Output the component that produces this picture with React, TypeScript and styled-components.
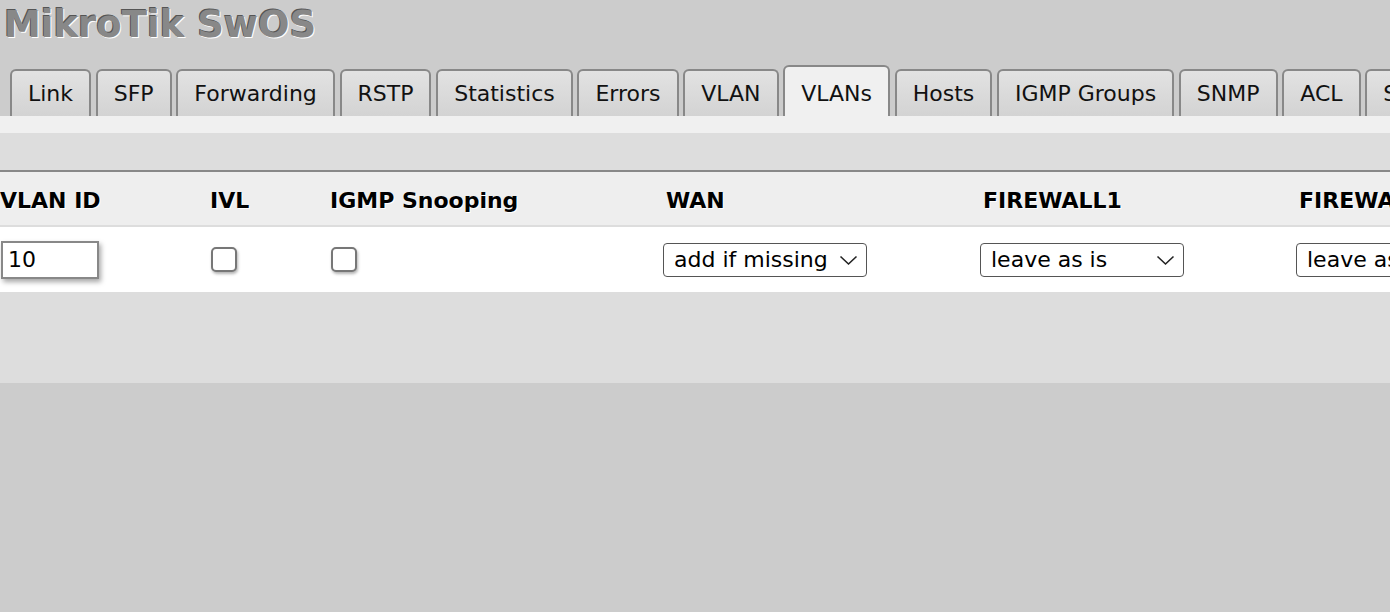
import React from 'react';
import styled, { createGlobalStyle } from 'styled-components';

const Global = createGlobalStyle`
  html, body { margin: 0; padding: 0; background: #cccccc; }
  body { font-family: "DejaVu Sans", Verdana, sans-serif; overflow: hidden; }
`;

const Page = styled.div`
  width: 1390px;
  height: 612px;
  overflow: hidden;
  background: #cccccc;
`;

const Title = styled.h1`
  margin: 0;
  height: 65px;
  box-sizing: border-box;
  padding: 6px 0 0 4px;
  font: bold 37px/37px "DejaVu Sans", Verdana, sans-serif;
  color: #888888;
  text-shadow: -1px -1px 0 #555555, 1px 1px 0 #ffffff;
  white-space: nowrap;
`;

const TabBar = styled.nav`
  display: flex;
  align-items: flex-end;
  gap: 4.7px;
  padding-left: 10px;
  height: 51px;
  white-space: nowrap;
`;

const Tab = styled.div<{ $active?: boolean }>`
  flex: none;
  box-sizing: border-box;
  border: 2px solid #888888;
  border-bottom: none;
  border-radius: 6px 6px 0 0;
  padding: ${(p) => (p.$active ? '14px' : '10px')} 16px 10px;
  font-size: 22px;
  line-height: 25px;
  color: #111111;
  background: ${(p) =>
    p.$active ? '#f0f0f0' : 'linear-gradient(#e2e2e2, #d3d3d3)'};
`;

const Strip = styled.div`
  height: 17px;
  background: #f0f0f0;
`;

const Panel = styled.section`
  background: #dddddd;
  padding: 37px 0 91px;
`;

const Table = styled.div`
  border-top: 2px solid #888888;
  overflow: hidden;
`;

const Row = styled.div<{ $head?: boolean }>`
  display: grid;
  grid-template-columns: 210px 120px 333px 317px 316px 317px 317px;
  align-items: center;
  height: ${(p) => (p.$head ? '53px' : '65px')};
  background: ${(p) => (p.$head ? '#eeeeee' : '#ffffff')};
  border-bottom: ${(p) => (p.$head ? '2px solid #dddddd' : 'none')};
  white-space: nowrap;
`;

const HeadCell = styled.div<{ $indent?: number }>`
  padding-left: ${(p) => p.$indent ?? 0}px;
  padding-top: 3px;
  font-weight: bold;
  font-size: 22px;
  color: #000000;
  text-shadow: 1px 1px 0 #ffffff;
`;

const Cell = styled.div`
  display: flex;
  align-items: center;
  padding-left: 1px;
`;

const TextInput = styled.input`
  box-sizing: border-box;
  width: 98px;
  height: 38px;
  border: 2px solid #888888;
  padding: 0 5px;
  margin: 0;
  font: 22px "DejaVu Sans", Verdana, sans-serif;
  color: #000000;
  background: #ffffff;
  box-shadow: 2px 3px 5px rgba(0, 0, 0, 0.35);
  outline: none;
`;

const Check = styled.input`
  appearance: none;
  -webkit-appearance: none;
  box-sizing: border-box;
  width: 26px;
  height: 25px;
  margin: 0;
  border: 2px solid #777777;
  border-radius: 5px;
  background: #ffffff;
  box-shadow: 1px 2px 3px rgba(0, 0, 0, 0.3);
`;

const SelectWrap = styled.div`
  position: relative;
  margin-left: -1px;
  width: 204px;
  height: 34px;
`;

const Select = styled.select`
  appearance: none;
  -webkit-appearance: none;
  box-sizing: border-box;
  width: 204px;
  height: 34px;
  margin: 0;
  border: 1px solid #555555;
  border-radius: 4px;
  padding: 0 0 0 10px;
  background: #ffffff;
  font: 22px "DejaVu Sans", Verdana, sans-serif;
  color: #000000;
  outline: none;
`;

const Chevron = styled.svg`
  position: absolute;
  right: 9px;
  top: 12px;
  pointer-events: none;
`;

const tabs = [
  'Link',
  'SFP',
  'Forwarding',
  'RSTP',
  'Statistics',
  'Errors',
  'VLAN',
  'VLANs',
  'Hosts',
  'IGMP Groups',
  'SNMP',
  'ACL',
  'System',
  'Upgrade',
];

const ports = ['WAN', 'FIREWALL1', 'FIREWALL2', 'LAN'];
const values = ['add if missing', 'leave as is', 'leave as is', 'leave as is'];

function Dropdown({ value }: { value: string }) {
  return (
    <SelectWrap>
      <Select defaultValue={value}>
        <option>leave as is</option>
        <option>always strip</option>
        <option>add if missing</option>
        <option>not a member</option>
      </Select>
      <Chevron width="19" height="11" viewBox="0 0 19 11">
        <polyline
          points="1.5,1.5 9.5,9 17.5,1.5"
          fill="none"
          stroke="#222"
          strokeWidth="1.6"
        />
      </Chevron>
    </SelectWrap>
  );
}

export default function App() {
  return (
    <Page>
      <Global />
      <Title>MikroTik SwOS</Title>
      <TabBar>
        {tabs.map((t) => (
          <Tab key={t} $active={t === 'VLANs'}>
            {t}
          </Tab>
        ))}
      </TabBar>
      <Strip />
      <Panel>
        <Table>
          <Row $head>
            <HeadCell>VLAN ID</HeadCell>
            <HeadCell>IVL</HeadCell>
            <HeadCell>IGMP Snooping</HeadCell>
            {ports.map((p) => (
              <HeadCell key={p} $indent={3}>
                {p}
              </HeadCell>
            ))}
          </Row>
          <Row>
            <Cell>
              <TextInput defaultValue="10" />
            </Cell>
            <Cell>
              <Check type="checkbox" />
            </Cell>
            <Cell>
              <Check type="checkbox" />
            </Cell>
            {values.map((v, i) => (
              <Cell key={i}>
                <Dropdown value={v} />
              </Cell>
            ))}
          </Row>
        </Table>
      </Panel>
    </Page>
  );
}
